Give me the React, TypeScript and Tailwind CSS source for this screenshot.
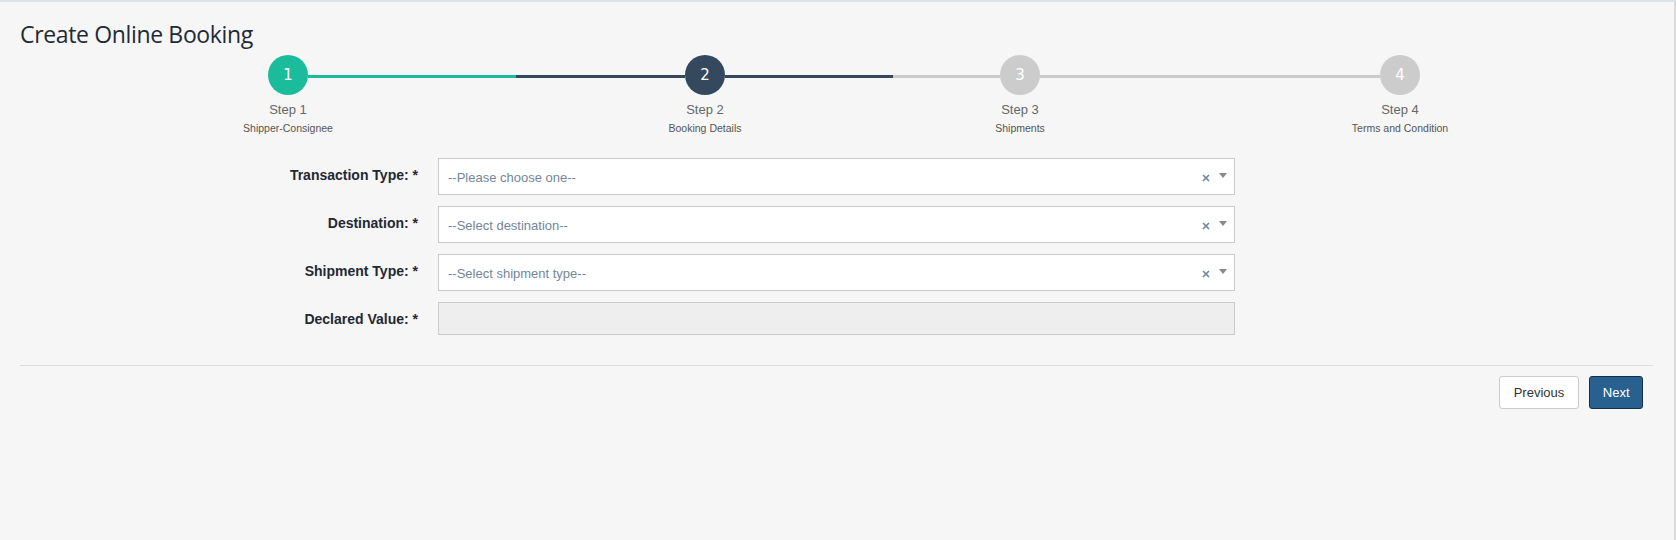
import React from "react";

function Circle({ n, cls }: { n: number; cls: string }) {
  return (
    <div
      className={`w-10 h-10 rounded-full flex items-center justify-center text-white text-[15px] ${cls}`}
      style={{ fontFamily: '"DejaVu Sans", sans-serif' }}
    >
      {n}
    </div>
  );
}

function Step({ n, title, sub, cls }: { n: number; title: string; sub: string; cls: string }) {
  return (
    <div className="w-10 flex flex-col items-center shrink-0">
      <Circle n={n} cls={cls} />
      <div className="mt-[6px] whitespace-nowrap text-[13px] leading-[18px] text-[#666]">{title}</div>
      <div className="mt-[2px] whitespace-nowrap text-[10.5px] leading-[14px] text-[#555]">{sub}</div>
    </div>
  );
}

function SelectBox({ placeholder }: { placeholder: string }) {
  return (
    <div className="w-[797px] h-[37px] bg-white border border-[#cbcbcb] flex items-center pl-[9px] pr-[7px]">
      <span className="flex-1 text-[13px] text-[#75859a] pt-[2px]">{placeholder}</span>
      <svg width="8" height="8" viewBox="0 0 8 8" className="mr-[9px] mt-[2px]">
        <path d="M1 1 L7 7 M7 1 L1 7" stroke="#7386a0" strokeWidth="1.7" />
      </svg>
      <svg width="8" height="5" viewBox="0 0 8 5" className="mb-[2px]">
        <path d="M0 0 L8 0 L4 5 Z" fill="#888" />
      </svg>
    </div>
  );
}

function Row({ label, children }: { label: string; children: React.ReactNode }) {
  return (
    <div className="flex items-start">
      <label className="w-[398px] text-right pt-[7px] text-[14px] leading-[20px] font-bold text-[#1f2833]">
        {label}
      </label>
      <div className="ml-[20px]">{children}</div>
    </div>
  );
}

export default function App() {
  return (
    <div
      className="w-[1676px] h-[540px] bg-[#f6f6f6] border-t-2 border-t-[#dde2e8] border-r-2 border-r-[#dadada] overflow-hidden"
      style={{ fontFamily: '"Liberation Sans", Arial, sans-serif' }}
    >
      <div className="pl-[20px] pr-[21px]">
        <h1
          className="pt-[18px] text-[23px] leading-[28px] text-[#1f2a36] tracking-[-0.35px]"
          style={{ fontFamily: '"Open Sans", sans-serif' }}
        >
          Create Online Booking
        </h1>

        <div className="flex items-start ml-[248px] mt-[7px]">
          <Step n={1} title="Step 1" sub="Shipper-Consignee" cls="bg-[#1abc9c]" />
          <div className="flex mt-[20px] h-[3px] w-[377px] shrink-0">
            <div className="w-[208px] bg-[#1abc9c]" />
            <div className="flex-1 bg-[#34495e]" />
          </div>
          <Step n={2} title="Step 2" sub="Booking Details" cls="bg-[#34495e]" />
          <div className="flex mt-[20px] h-[3px] w-[275px] shrink-0">
            <div className="w-[168px] bg-[#34495e]" />
            <div className="flex-1 bg-[#cccccc]" />
          </div>
          <Step n={3} title="Step 3" sub="Shipments" cls="bg-[#cccccc]" />
          <div className="mt-[20px] h-[3px] w-[340px] shrink-0 bg-[#cccccc]" />
          <Step n={4} title="Step 4" sub="Terms and Condition" cls="bg-[#cccccc]" />
        </div>

        <div className="mt-[23px] flex flex-col gap-[11px]">
          <Row label="Transaction Type: *">
            <SelectBox placeholder="--Please choose one--" />
          </Row>
          <Row label="Destination: *">
            <SelectBox placeholder="--Select destination--" />
          </Row>
          <Row label="Shipment Type: *">
            <SelectBox placeholder="--Select shipment type--" />
          </Row>
          <Row label="Declared Value: *">
            <div className="w-[797px] h-[33px] bg-[#eeeeee] border border-[#cbcbcb]" />
          </Row>
        </div>

        <div className="mt-[30px] border-t border-[#dddddd]" />

        <div className="flex justify-end gap-[10px] mt-[10px] mr-[10px]">
          <button className="h-[33px] px-[14px] bg-white border border-[#cccccc] rounded-[3px] text-[13px] text-[#333]">
            Previous
          </button>
          <button className="h-[33px] px-[12.5px] bg-[#28608f] border border-[#16304a] rounded-[3px] text-[13px] text-white">
            Next
          </button>
        </div>
      </div>
    </div>
  );
}
